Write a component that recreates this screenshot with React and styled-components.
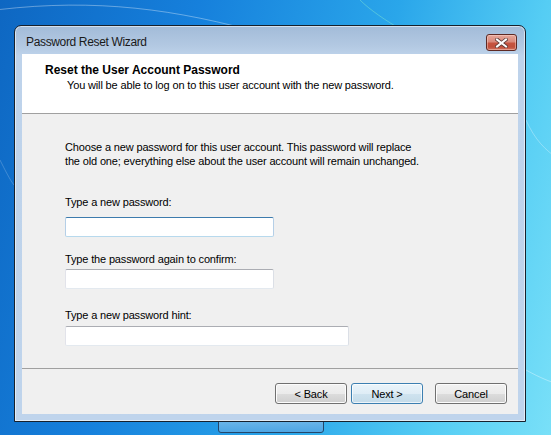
import React from "react";
import styled, { createGlobalStyle } from "styled-components";

const GlobalStyle = createGlobalStyle`
  html, body {
    margin: 0;
    padding: 0;
  }
  body {
    font-family: 'Liberation Sans', Arial, sans-serif;
    font-size: 11px;
    color: #000;
  }
`;

const Desktop = styled.div`
  position: relative;
  width: 551px;
  height: 435px;
  overflow: hidden;
  box-sizing: border-box;
  padding: 25px 0 0 14px;
  background: linear-gradient(105deg, #0e67c2 0%, #1680dc 30%, #2aa6ea 60%, #55cdf4 82%, #79e0f8 100%);
`;

const Wallpaper = styled.svg`
  position: absolute;
  inset: 0;
  pointer-events: none;
`;

const BehindButton = styled.div`
  position: absolute;
  left: 218px;
  top: 418px;
  width: 104px;
  height: 13px;
  border: 1px solid #24466a;
  border-radius: 0 0 3px 3px;
  background: linear-gradient(#6fb8ea, #4fa6e4);
`;

const Window = styled.div`
  position: relative;
  width: 512px;
  height: 397px;
  box-sizing: border-box;
  border: 1px solid #17212d;
  border-radius: 7px 7px 0 0;
  background: linear-gradient(#a2bbd8 0px, #b3c9e2 20px, #bed3eb 30px, #bfd4ec 100%);
  box-shadow: inset 0 0 0 1px rgba(255, 255, 255, 0.55);
  display: flex;
  flex-direction: column;
`;

const TitleBar = styled.div`
  height: 28px;
  box-sizing: border-box;
  display: flex;
  justify-content: space-between;
  align-items: flex-start;
  padding: 8px 8px 0 11px;
`;

const Title = styled.span`
  font-family: 'Liberation Sans', Arial, sans-serif;
  font-size: 12px;
  line-height: 15px;
  letter-spacing: -0.35px;
  margin-top: 1px;
  color: #1a1a1a;
`;

const CloseButton = styled.button`
  width: 31px;
  height: 17px;
  padding: 0;
  border: 1px solid #5e2a24;
  border-radius: 3px;
  background: linear-gradient(#e6a699 0%, #d98a7c 45%, #c6533f 55%, #c0503c 80%, #d27460 100%);
  box-shadow: inset 0 0 0 1px rgba(255, 220, 210, 0.45);
  display: flex;
  align-items: center;
  justify-content: center;
`;

const ClientFrame = styled.div`
  flex: 1;
  padding: 0 7px 7px 7px;
  display: flex;
`;

const Client = styled.div`
  width: 496px;
  height: 360px;
  background: #f0f0f0;
  display: flex;
  flex-direction: column;
  letter-spacing: -0.15px;
`;

const Header = styled.div`
  height: 59px;
  background: #fff;
  border-bottom: 1px solid #a0a0a0;
  box-sizing: content-box;
  padding-left: 23px;
`;

const Heading = styled.div`
  font-weight: bold;
  font-size: 12px;
  line-height: 13px;
  letter-spacing: 0;
  margin-top: 10px;
`;

const Subtitle = styled.div`
  font-size: 11px;
  line-height: 13px;
  margin-top: 2px;
  padding-left: 22px;
`;

const Body = styled.div`
  height: 254px;
  padding: 26px 0 0 43px;
  box-sizing: border-box;
  display: flex;
  flex-direction: column;
  align-items: flex-start;
`;

const Paragraph = styled.p`
  margin: 0;
  font-size: 11px;
  line-height: 14px;
`;

const Label = styled.label`
  display: block;
  font-size: 11px;
  line-height: 13px;
  margin-top: ${(p) => p.$top}px;
`;

const TextBox = styled.input`
  display: block;
  box-sizing: border-box;
  width: ${(p) => p.$width}px;
  height: 20px;
  margin: ${(p) => p.$gap}px 0 0 0;
  padding: 0 3px;
  border: 1px solid;
  border-color: ${(p) =>
    p.$focused ? "#3d7bad #b5cfe7 #b7d9ed #b5cfe7" : "#abadb3 #dbdfe6 #e3e9ef #e2e3ea"};
  border-radius: 2px;
  background: #fff;
  font-family: 'Liberation Sans', Arial, sans-serif;
  font-size: 11px;
  outline: none;
`;

const Footer = styled.div`
  flex: 1;
  border-top: 1px solid #a0a0a0;
  display: flex;
  justify-content: flex-end;
  align-items: flex-start;
  padding: 14px 11px 0 0;
`;

const Button = styled.button`
  width: 72px;
  height: 21px;
  margin-left: ${(p) => p.$gap}px;
  padding: 0;
  border: 1px solid ${(p) => (p.$primary ? "#3c7fb1" : "#707070")};
  border-radius: 3px;
  background: ${(p) =>
    p.$primary
      ? "linear-gradient(#eaf4fa 0%, #dfedf6 50%, #cfe3ef 51%, #c4dbe9 100%)"
      : "linear-gradient(#f2f2f2 0%, #ebebeb 50%, #dddddd 51%, #cfcfcf 100%)"};
  box-shadow: inset 0 0 0 1px ${(p) => (p.$primary ? "rgba(255,255,255,0.7)" : "#fcfcfc")};
  font-family: 'Liberation Sans', Arial, sans-serif;
  font-size: 11px;
  letter-spacing: -0.15px;
  color: #000;
`;

const CloseGlyph = () => (
  <svg width="13" height="10" viewBox="0 0 13 10">
    <path
      d="M2 1.5 L11 8.5 M11 1.5 L2 8.5"
      stroke="#5a3a36"
      strokeWidth="3.6"
      strokeLinecap="square"
    />
    <path
      d="M2 1.5 L11 8.5 M11 1.5 L2 8.5"
      stroke="#ffffff"
      strokeWidth="2"
      strokeLinecap="square"
    />
  </svg>
);

const App = () => {
  return (
    <>
      <GlobalStyle />
      <Desktop>
        <Wallpaper width="551" height="435" viewBox="0 0 551 435">
          <path d="M-20 12 C 80 -2, 160 6, 250 30" stroke="rgba(255,255,255,0.35)" strokeWidth="1" fill="none" />
          <path d="M360 0 C 380 20, 420 40, 470 70" stroke="rgba(160,255,200,0.35)" strokeWidth="1" fill="none" />
          <path d="M526 120 C 535 140, 545 150, 560 160" stroke="rgba(255,255,255,0.3)" strokeWidth="1" fill="none" />
          <path d="M526 370 C 535 375, 545 380, 560 385" stroke="rgba(255,255,255,0.35)" strokeWidth="1" fill="none" />
          <path d="M0 160 C 5 170, 10 180, 14 185" stroke="rgba(255,255,255,0.2)" strokeWidth="1" fill="none" />
        </Wallpaper>
        <BehindButton />
        <Window>
          <TitleBar>
            <Title>Password Reset Wizard</Title>
            <CloseButton aria-label="Close">
              <CloseGlyph />
            </CloseButton>
          </TitleBar>
          <ClientFrame>
            <Client>
              <Header>
                <Heading>Reset the User Account Password</Heading>
                <Subtitle>You will be able to log on to this user account with the new password.</Subtitle>
              </Header>
              <Body>
                <Paragraph>
                  Choose a new password for this user account. This password will replace
                  <br />
                  the old one; everything else about the user account will remain unchanged.
                </Paragraph>
                <Label $top={28}>Type a new password:</Label>
                <TextBox type="password" $width={209} $gap={8} $focused />
                <Label $top={16}>Type the password again to confirm:</Label>
                <TextBox type="password" $width={209} $gap={3} />
                <Label $top={20}>Type a new password hint:</Label>
                <TextBox type="text" $width={284} $gap={4} />
              </Body>
              <Footer>
                <Button $gap={0}>&lt; Back</Button>
                <Button $gap={4} $primary>Next &gt;</Button>
                <Button $gap={12}>Cancel</Button>
              </Footer>
            </Client>
          </ClientFrame>
        </Window>
      </Desktop>
    </>
  );
};

export default App;
